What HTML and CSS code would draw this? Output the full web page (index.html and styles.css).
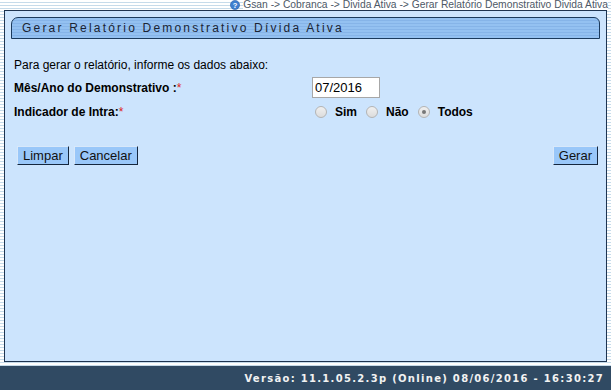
FILE: index.html
```html
<!DOCTYPE html>
<html>
<head>
<meta charset="utf-8">
<link rel="stylesheet" href="styles.css">
</head>
<body>
<div class="page">
  <div class="crumbs">
    <svg class="help" width="10" height="10" viewBox="0 0 10 10"><circle cx="5" cy="5" r="4.6" fill="#3f7fcf"/><circle cx="5" cy="5" r="4.6" fill="none" stroke="#2a5ea8" stroke-width="0.6"/><text x="5" y="8" font-size="7.5" font-weight="bold" fill="#fff" text-anchor="middle" font-family="Liberation Sans, sans-serif">?</text></svg>
    <span>Gsan -&gt; Cobranca -&gt; Divida Ativa -&gt; Gerar Relatório Demonstrativo Divida Ativa</span>
  </div>
  <div class="panel">
    <div class="titlebar"><span>Gerar Relatório Demonstrativo Dívida Ativa</span></div>
    <p class="intro">Para gerar o relatório, informe os dados abaixo:</p>
    <div class="row first">
      <label class="lbl">Mês/Ano do Demonstrativo :<span class="req">*</span></label>
      <input class="field" type="text" value="07/2016">
    </div>
    <div class="row second">
      <label class="lbl">Indicador de Intra:<span class="req">*</span></label>
      <div class="radios">
        <span class="radio"></span><span class="rl">Sim</span>
        <span class="radio"></span><span class="rl">Não</span>
        <span class="radio on"></span><span class="rl">Todos</span>
      </div>
    </div>
    <div class="buttons">
      <div class="left">
        <button class="btn">Limpar</button>
        <button class="btn">Cancelar</button>
      </div>
      <button class="btn">Gerar</button>
    </div>
  </div>
  <div class="footer">Versão: 11.1.05.2.3p (Online) 08/06/2016 - 16:30:27</div>
</div>
</body>
</html>
```
FILE: styles.css
```css
html, body {
  margin: 0;
  padding: 0;
}
body {
  width: 611px;
  height: 390px;
  overflow: hidden;
  font-family: "Liberation Sans", Arial, sans-serif;
  background: repeating-linear-gradient(to bottom, #ffffff 0 2px, #c6dbea 2px 3px);
}
.page {
  display: flex;
  flex-direction: column;
  height: 390px;
}
.crumbs {
  height: 10px;
  display: flex;
  justify-content: flex-end;
  align-items: center;
  gap: 3px;
  padding-right: 3px;
  font-size: 10.3px;
  line-height: 10px;
  color: #4d5866;
}
.crumbs span {
  background: #fff;
}
.help {
  display: block;
}
.panel {
  margin: 0 4px 0 4px;
  height: 352px;
  box-sizing: border-box;
  border: 1px solid #1e3450;
  background: #cce4fd;
  padding: 6px 6px 0 6px;
}
.titlebar {
  height: 22px;
  box-sizing: border-box;
  border: 1px solid #1b3a5c;
  border-radius: 7px 6px 0 0;
  background: repeating-linear-gradient(to bottom, #94c1f1 0 2px, #86b4e8 2px 3px);
  display: flex;
  align-items: center;
  padding-left: 10px;
  font-size: 12px;
  letter-spacing: 2.2px;
  color: #1b2433;
}
.intro {
  margin: 19px 0 0 3px;
  font-size: 12px;
  line-height: 14px;
  color: #000;
}
.row {
  display: flex;
  align-items: center;
  margin-left: 3px;
}
.row.first {
  margin-top: 5px;
}
.row.second {
  margin-top: 4px;
  height: 20px;
}
.lbl {
  width: 298px;
  font-size: 12px;
  font-weight: bold;
  color: #000;
}
.req {
  color: #d22;
  font-weight: normal;
}
.field {
  margin: 0;
  width: 68px;
  height: 21px;
  box-sizing: border-box;
  border: 1px solid #a7a7a7;
  padding: 1px 2px;
  font-family: "Liberation Sans", Arial, sans-serif;
  font-size: 13px;
  background: #fff;
  color: #000;
}
.radios {
  display: flex;
  align-items: center;
  padding-left: 3px;
}
.radio {
  width: 12px;
  height: 12px;
  box-sizing: border-box;
  border-radius: 50%;
  border: 1px solid #b4b4b4;
  background: linear-gradient(#f0f0f0, #dcdcdc);
  margin-right: 8px;
  position: relative;
}
.radio.on::after {
  content: "";
  position: absolute;
  left: 3px;
  top: 3px;
  width: 4px;
  height: 4px;
  border-radius: 50%;
  background: #777;
}
.rl {
  font-size: 12px;
  font-weight: bold;
  margin-right: 9px;
}
.buttons {
  display: flex;
  justify-content: space-between;
  margin: 24px 2px 0 6px;
}
.left {
  display: flex;
  gap: 5px;
}
.btn {
  margin: 0;
  height: 19px;
  box-sizing: border-box;
  padding: 0 5px;
  border: 1px solid #14263d;
  border-left-color: #d8e8fa;
  border-top-color: #d8e8fa;
  background: #99c7f9;
  font-family: "Liberation Sans", Arial, sans-serif;
  font-size: 13px;
  color: #111;
  line-height: 15px;
}
.footer {
  margin-top: 4px;
  height: 24px;
  background: #304a63;
  color: #f2f2f2;
  font-family: "DejaVu Sans", Verdana, sans-serif;
  font-size: 10px;
  font-weight: bold;
  letter-spacing: 1.3px;
  display: flex;
  align-items: center;
  justify-content: flex-end;
  padding-right: 7px;
}
```
